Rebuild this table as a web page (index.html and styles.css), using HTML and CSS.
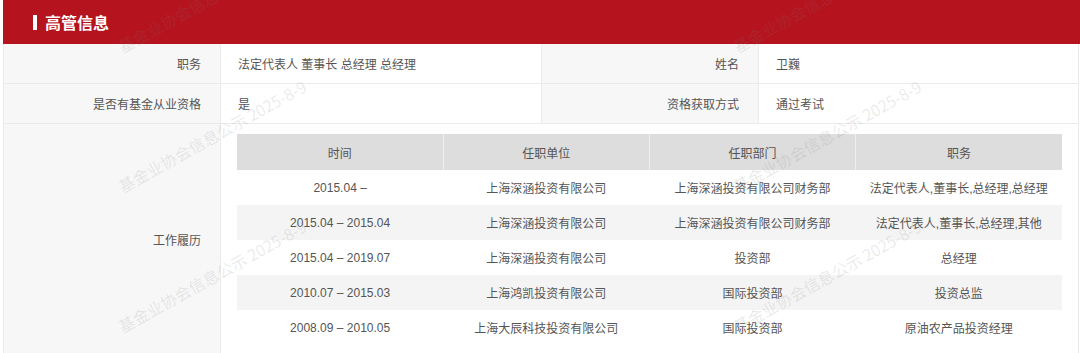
FILE: index.html
```html
<!DOCTYPE html>
<html lang="zh">
<head>
<meta charset="utf-8">
<title>高管信息</title>
<link rel="stylesheet" href="styles.css">
</head>
<body>
<div class="page">
  <div class="panel-head"><span class="bar"></span><span class="title">高管信息</span></div>
  <table class="info">
    <colgroup><col class="c-label"><col class="c-val1"><col class="c-label"><col class="c-val2"></colgroup>
    <tr>
      <th>职务</th><td>法定代表人 董事长 总经理 总经理</td>
      <th>姓名</th><td>卫巍</td>
    </tr>
    <tr>
      <th>是否有基金从业资格</th><td>是</td>
      <th>资格获取方式</th><td>通过考试</td>
    </tr>
    <tr>
      <th>工作履历</th>
      <td colspan="3" class="resume-cell">
        <table class="resume">
          <thead>
            <tr><th>时间</th><th>任职单位</th><th>任职部门</th><th>职务</th></tr>
          </thead>
          <tbody>
            <tr><td>2015.04 –</td><td>上海深涵投资有限公司</td><td>上海深涵投资有限公司财务部</td><td>法定代表人,董事长,总经理,总经理</td></tr>
            <tr><td>2015.04 – 2015.04</td><td>上海深涵投资有限公司</td><td>上海深涵投资有限公司财务部</td><td>法定代表人,董事长,总经理,其他</td></tr>
            <tr><td>2015.04 – 2019.07</td><td>上海深涵投资有限公司</td><td>投资部</td><td>总经理</td></tr>
            <tr><td>2010.07 – 2015.03</td><td>上海鸿凯投资有限公司</td><td>国际投资部</td><td>投资总监</td></tr>
            <tr><td>2008.09 – 2010.05</td><td>上海大辰科技投资有限公司</td><td>国际投资部</td><td>原油农产品投资经理</td></tr>
          </tbody>
        </table>
      </td>
    </tr>
  </table>
  <div class="watermarks" aria-hidden="true">
    <span class="wm wm-a1">基金业协会信息公示 2025-8-9</span>
    <span class="wm wm-a2">基金业协会信息公示 2025-8-9</span>
    <span class="wm wm-a3">基金业协会信息公示 2025-8-9</span>
    <span class="wm wm-b1">基金业协会信息公示 2025-8-9</span>
    <span class="wm wm-b2">基金业协会信息公示 2025-8-9</span>
    <span class="wm wm-b3">基金业协会信息公示 2025-8-9</span>
  </div>
</div>
</body>
</html>
```

FILE: styles.css
```css
html, body {
  margin: 0;
  padding: 0;
  background: #ffffff;
}

body {
  font-family: "Liberation Sans", "Noto Sans CJK SC", sans-serif;
  font-size: 12px;
  color: #555555;
  overflow: hidden;
}

.page {
  position: relative;
  padding-left: 3px;
  height: 353px;
  overflow: hidden;
}

.panel-head {
  height: 44px;
  background: #b5141f;
  display: flex;
  align-items: center;
  padding-left: 30px;
  gap: 8px;
}

.bar {
  width: 4px;
  height: 15px;
  background: #ffffff;
}

.title {
  color: #ffffff;
  font-family: "Noto Sans CJK SC", sans-serif;
  font-size: 16px;
  font-weight: bold;
  line-height: 20px;
}

.info {
  width: 1075px;
  border-collapse: collapse;
  table-layout: fixed;
  border-left: 1px solid #ebebeb;
  border-right: 1px solid #ebebeb;
}

.c-label { width: 217px; }
.c-val1 { width: 321px; }
.c-val2 { width: 320px; }

.info > tbody > tr > th,
.info > tr > th {
  font-weight: normal;
  text-align: right;
  background: #f7f7f7;
  padding: 0 19px 0 0;
  height: 39px;
  border-bottom: 1px solid #ebebeb;
  border-right: 1px solid #ebebeb;
  color: #555555;
  vertical-align: middle;
}

.info > tbody > tr > td,
.info > tr > td {
  text-align: left;
  padding: 0 0 0 17px;
  height: 39px;
  border-bottom: 1px solid #ebebeb;
  border-right: 1px solid #ebebeb;
  vertical-align: middle;
}

.info td.resume-cell {
  padding: 10px 15px 10px 16px;
}

.resume {
  width: 825px;
  border-collapse: collapse;
  table-layout: fixed;
}

.resume th {
  background: #dddddd;
  font-weight: normal;
  height: 36px;
  padding: 0;
  text-align: center;
  color: #555555;
  border-left: 1px solid #f0f0f0;
}

.resume th:first-child {
  border-left: none;
}

.resume td {
  height: 35px;
  padding: 0;
  text-align: center;
  color: #555555;
  white-space: nowrap;
}

.resume tbody tr:nth-child(even) td {
  background: #f4f4f4;
}

.watermarks {
  position: absolute;
  left: 0;
  top: 0;
  width: 1080px;
  height: 353px;
  pointer-events: none;
  overflow: hidden;
}

.wm {
  position: absolute;
  white-space: nowrap;
  font-family: "Noto Sans CJK SC", sans-serif;
  font-size: 16px;
  line-height: 20px;
  color: rgba(120, 120, 120, 0.16);
  transform: translate(-50%, -50%) rotate(-29deg);
}

.wm-a1 { left: 212px; top: -4px; }
.wm-a2 { left: 212px; top: 136px; }
.wm-a3 { left: 212px; top: 276px; }
.wm-b1 { left: 827px; top: -4px; }
.wm-b2 { left: 827px; top: 136px; }
.wm-b3 { left: 827px; top: 276px; }
```
